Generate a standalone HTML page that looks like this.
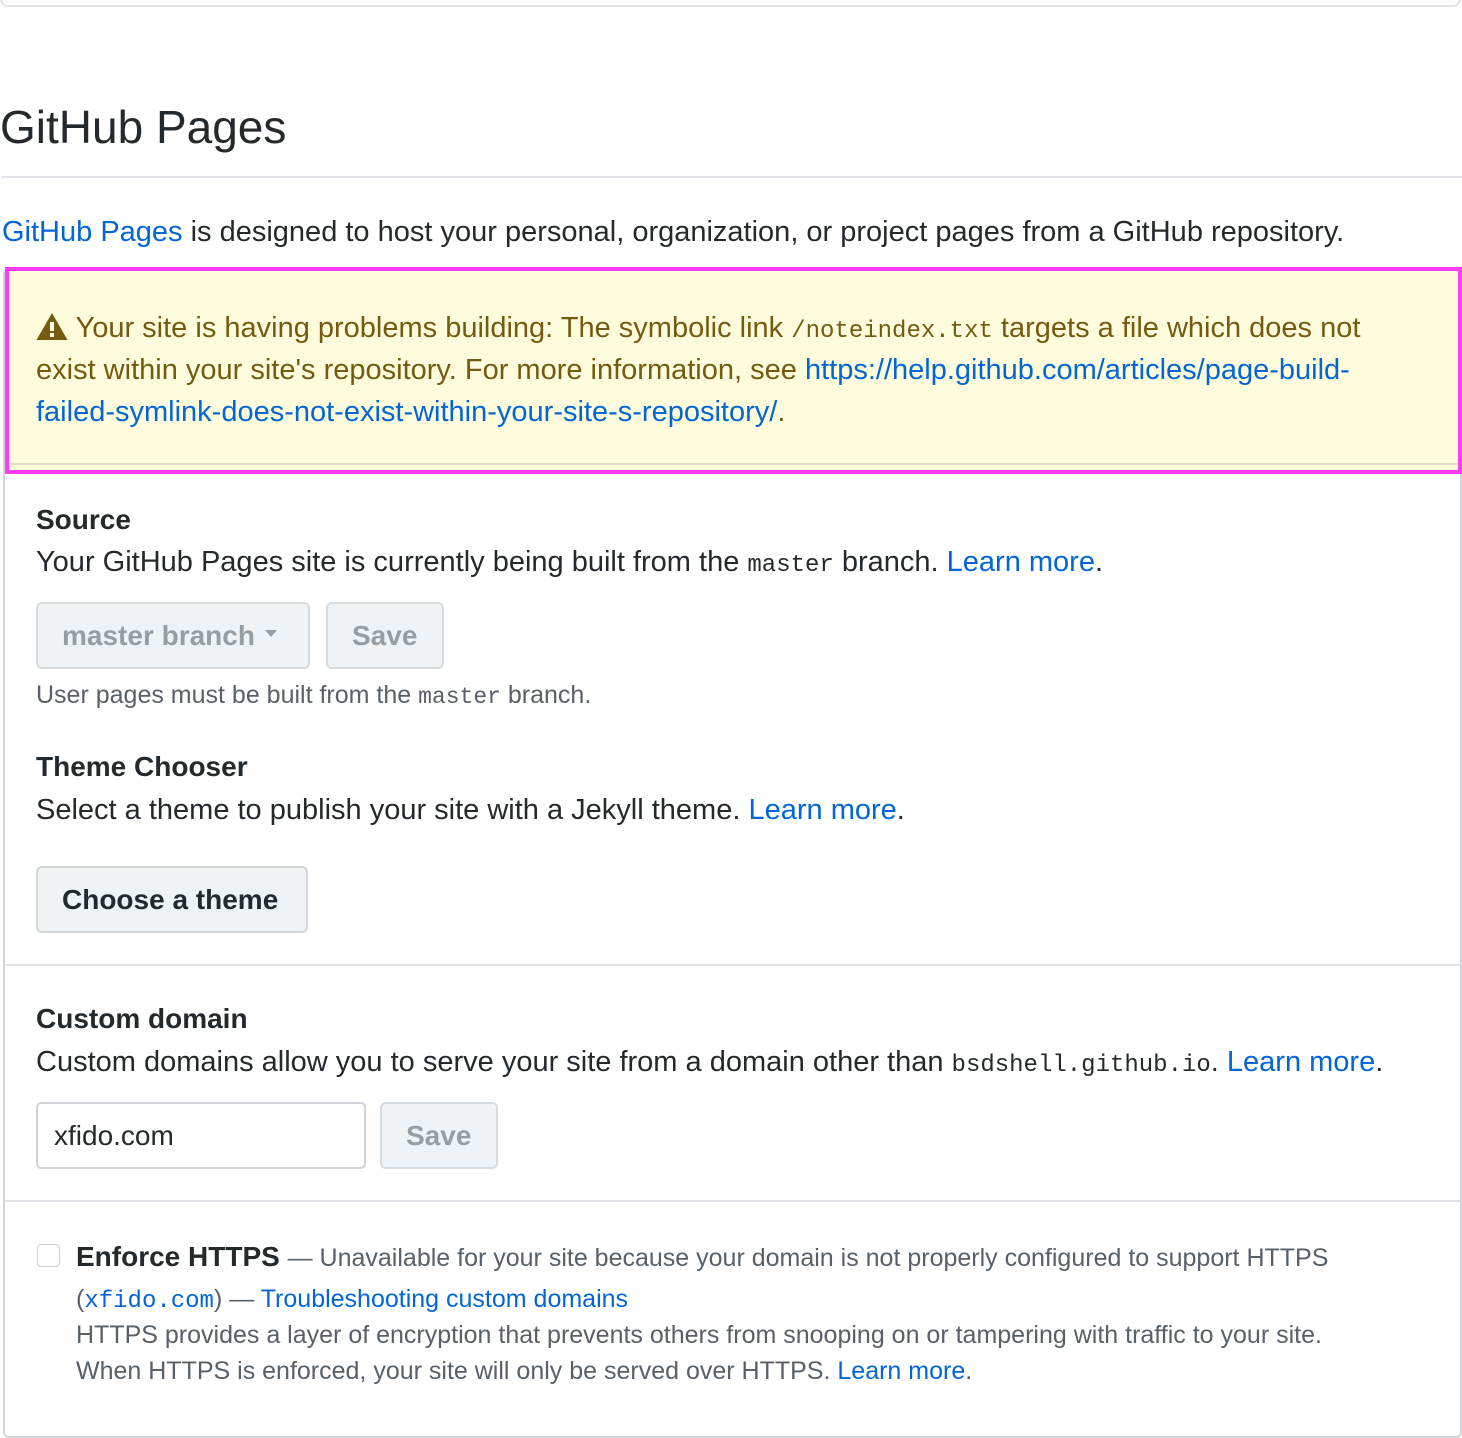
<!DOCTYPE html>
<html><head><meta charset="utf-8"><style>
*{margin:0;padding:0;box-sizing:border-box}
body{width:1462px;height:1422px;background:#fff;font-family:"Liberation Sans",Arial,sans-serif;color:#24292e;position:relative;overflow:hidden}
.a{position:absolute;white-space:nowrap}
.t{font-size:29px;line-height:42px}
.b{font-weight:bold;font-size:28px}
a{color:#0366d6;text-decoration:none}
code{font-family:"Liberation Mono",monospace;font-size:24px;line-height:1}
.btn{position:absolute;height:67px;border:2px solid #d1d5da;border-radius:6px;background:#eff3f6;font-size:28px;font-weight:bold;line-height:63px;padding-left:24px}
.dis{color:#959da5;background:#eff3f6;border-color:#d6dbe0}
.s{font-size:25px;line-height:36px;color:#586069}
</style></head><body>
<div class="a" style="left:0;top:-10px;width:1461px;height:17px;border:2px solid #e1e4e8;border-top:none;border-radius:0 0 8px 8px"></div>
<div class="a" style="left:0;top:99px;font-size:46px;line-height:56px">GitHub Pages</div>
<div class="a" style="left:2px;top:176px;width:1460px;height:2px;background:#e1e4e8"></div>
<div class="a t" style="left:2px;top:211px"><a>GitHub Pages</a> is designed to host your personal, organization, or project pages from a GitHub repository.</div>

<div class="a" style="left:3px;top:268px;width:1459px;height:1170px;border:2px solid #d1d5da;border-radius:6px"></div>
<div class="a" style="left:5px;top:267px;width:1457px;height:207px;background:#fffbdd;border:4px solid #ff3cf5"></div>
<div class="a" style="left:9px;top:463px;width:1449px;height:2px;background:#e0dcc4"></div>
<div class="a t" style="left:36px;top:307px;color:#735c0f">
<div style="height:42px"><svg width="32" height="28" viewBox="0 0 16 14" style="vertical-align:-3px"><path fill="#735c0f" d="M8 0.5L15.8 14H0.2z"/><rect x="7" y="5" width="2" height="4.5" fill="#fffbdd"/><rect x="7" y="10.5" width="2" height="2" fill="#fffbdd"/></svg> Your site is having problems building: The symbolic link <code>/noteindex.txt</code> targets a file which does not</div>
<div style="height:42px">exist within your site's repository. For more information, see <a>https://help.github.com/articles/page-build-</a></div>
<div style="height:42px"><a>failed-symlink-does-not-exist-within-your-site-s-repository/</a>.</div></div>

<div class="a t b" style="left:36px;top:499px">Source</div>
<div class="a t" style="left:36px;top:541px">Your GitHub Pages site is currently being built from the <code>master</code> branch. <a>Learn more</a>.</div>
<div class="btn dis" style="left:36px;top:602px;width:274px">master branch <span style="display:inline-block;border:6px solid transparent;border-top:7px solid #959da5;vertical-align:2px;margin-left:2px"></span></div>
<div class="btn dis" style="left:326px;top:602px;width:118px">Save</div>
<div class="a s" style="left:36px;top:677px">User pages must be built from the <code style="font-size:23px">master</code> branch.</div>

<div class="a t b" style="left:36px;top:746px">Theme Chooser</div>
<div class="a t" style="left:36px;top:789px">Select a theme to publish your site with a Jekyll theme. <a>Learn more</a>.</div>
<div class="btn" style="left:36px;top:866px;width:272px;color:#24292e">Choose a theme</div>
<div class="a" style="left:5px;top:964px;width:1455px;height:2px;background:#e1e4e8"></div>

<div class="a t b" style="left:36px;top:998px">Custom domain</div>
<div class="a t" style="left:36px;top:1041px">Custom domains allow you to serve your site from a domain other than <code>bsdshell.github.io</code>. <a>Learn more</a>.</div>
<div class="a" style="left:36px;top:1102px;width:330px;height:67px;border:2px solid #d1d5da;border-radius:5px;font-size:28px;line-height:63px;padding-left:16px">xfido.com</div>
<div class="btn dis" style="left:380px;top:1102px;width:118px">Save</div>
<div class="a" style="left:5px;top:1200px;width:1455px;height:2px;background:#e1e4e8"></div>

<div class="a" style="left:37px;top:1244px;width:23px;height:23px;border:1px solid #ccc;border-radius:4px"></div>
<div class="a" style="left:76px;top:1236px;font-size:28px;line-height:42px"><b>Enforce HTTPS</b> <span style="font-size:25px;color:#586069">— Unavailable for your site because your domain is not properly configured to support HTTPS</span></div>
<div class="a s" style="left:76px;top:1281px">(<code style="font-size:24px;color:#0366d6">xfido.com</code>) — <a>Troubleshooting custom domains</a></div>
<div class="a s" style="left:76px;top:1317px">HTTPS provides a layer of encryption that prevents others from snooping on or tampering with traffic to your site.</div>
<div class="a s" style="left:76px;top:1353px">When HTTPS is enforced, your site will only be served over HTTPS. <a>Learn more</a>.</div>
</body></html>
